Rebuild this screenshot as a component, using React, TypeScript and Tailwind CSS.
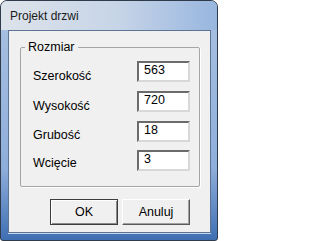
import React from 'react';

const rows = [
  { label: 'Szerokość', value: '563', lm: 'mt-[8px]' },
  { label: 'Wysokość', value: '720', lm: 'mt-[8px]' },
  { label: 'Grubość', value: '18', lm: 'mt-[7px]' },
  { label: 'Wcięcie', value: '3', lm: 'mt-[6px]' },
];

export default function App() {
  return (
    <div className="w-[218px] h-[241px] flex flex-col border border-[#2f3a4a] rounded-t-[7px] rounded-b-[3px] overflow-hidden bg-linear-to-b from-[#aac2e2] via-[#8eaedb] via-70% to-[#3f6fb2] font-['Liberation_Sans',Arial,sans-serif] text-black">
      {/* Title bar */}
      <div className="h-[29px] pl-[9px] pt-[8px] text-[12px] leading-[14px] text-[#1a1a1a] bg-linear-to-r from-[#dde3ea] via-[#c6d4e7] via-55% to-[#98b6df]">
        Projekt drzwi
      </div>

      {/* Client area */}
      <div className="flex-1 ml-[7px] mr-[6px] mb-[7px] border border-[#5d7394] bg-[#f0f0f0] flex flex-col shadow-[0_1px_0_#c5d6ee]">
        <fieldset className="mt-[9px] ml-[11px] mr-[10px] border border-[#a5a5a5] rounded-[2px] px-0 pt-[6px] pb-[15px] shadow-[1px_1px_0_#ffffff]">
          <legend className="ml-[4px] px-[3px] text-[12.5px] leading-[15px]">Rozmiar</legend>
          <div className="flex flex-col gap-[7px]">
            {rows.map((r) => (
              <div key={r.label} className="flex items-start pl-[12px] pr-[9px]">
                <span className={`flex-1 text-[12.5px] leading-[15px] ${r.lm}`}>{r.label}</span>
                <input
                  readOnly
                  value={r.value}
                  className="w-[53px] h-[21px] bg-white border-2 border-t-[#6b6b6b] border-l-[#6b6b6b] border-b-[#d8d8d8] border-r-[#d8d8d8] pl-[5px] pb-[4px] text-[12.5px] leading-[15px] outline-none font-['Liberation_Sans',Arial,sans-serif]"
                />
              </div>
            ))}
          </div>
        </fieldset>

        <div className="flex justify-end gap-[4px] mt-[12px] pr-[20px]">
          <button className="w-[68px] h-[26px] bg-[#f0f0f0] border border-[#3c3c3c] shadow-[inset_1px_1px_0_#ffffff,inset_-1px_-1px_0_#8a8a8a] text-[12.5px] leading-[15px]">
            OK
          </button>
          <button className="w-[68px] h-[26px] bg-[#f0f0f0] border border-t-white border-l-white border-b-[#5a5a5a] border-r-[#5a5a5a] shadow-[inset_-1px_-1px_0_#a0a0a0] text-[12.5px] leading-[15px]">
            Anuluj
          </button>
        </div>
      </div>
    </div>
  );
}
